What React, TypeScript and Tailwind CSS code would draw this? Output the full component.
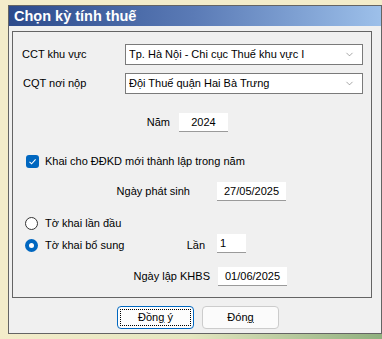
import React from 'react';
import { ChevronDown } from 'lucide-react';

function Select({ value }: { value: string }) {
  return (
    <div className="w-[238px] h-[21px] bg-white border border-[#7a7a7a] flex items-center pl-[3px] pr-[7px]">
      <span className="flex-1 truncate">{value}</span>
      <ChevronDown className="w-[11px] h-[11px] text-[#606060]" strokeWidth={1.2} />
    </div>
  );
}

function Field({ value, w, left }: { value: string; w: string; left?: boolean }) {
  return (
    <div
      className={`${w} h-[19px] bg-white border-b border-[#9a9a9a] flex items-center ${
        left ? 'pl-[3px]' : 'justify-center'
      }`}
    >
      {value}
    </div>
  );
}

function Radio({ checked }: { checked?: boolean }) {
  if (checked) {
    return (
      <div className="w-[13px] h-[13px] rounded-full bg-[#0067c0] flex items-center justify-center">
        <div className="w-[5px] h-[5px] rounded-full bg-white" />
      </div>
    );
  }
  return <div className="w-[13px] h-[13px] rounded-full border border-[#333] bg-white" />;
}

export default function App() {
  return (
    <div
      className="w-[382px] h-[339px] bg-[#f3ecca] pt-[5px] pl-[8px] text-[11px] text-black overflow-hidden"
      style={{ fontFamily: '"Liberation Sans", Arial, sans-serif' }}
    >
      <div className="w-[374px] h-[329px] border border-[#646464] bg-[#f0f0f0] flex flex-col">
        <div className="h-[20px] bg-gradient-to-r from-[#2c4a8c] via-[#5b7bb6] to-[#9dc0ea] flex items-center pl-[5px]">
          <span className="text-white font-bold text-[14.5px] leading-none">Chọn kỳ tính thuế</span>
        </div>

        <div className="ml-[3px] mt-[5px] w-[360px] h-[267px] border border-[#646464] flex flex-col">
          <div className="mt-[12px] flex items-center h-[21px]">
            <span className="w-[112px] pl-[9px]">CCT khu vực</span>
            <Select value="Tp. Hà Nội - Chi cục Thuế khu vực I" />
          </div>
          <div className="mt-[8px] flex items-center h-[21px]">
            <span className="w-[112px] pl-[10px]">CQT nơi nộp</span>
            <Select value="Đội Thuế quận Hai Bà Trưng" />
          </div>

          <div className="mt-[19px] flex items-center h-[19px]">
            <span className="w-[166px] text-right pr-[9px]">Năm</span>
            <Field value="2024" w="w-[49px]" />
          </div>

          <div className="mt-[23px] flex items-center h-[13px] pl-[13px]">
            <div className="w-[13px] h-[13px] rounded-[3px] bg-[#0067c0] flex items-center justify-center">
              <svg width="9" height="9" viewBox="0 0 9 9" fill="none">
                <path d="M1.5 4.8 L3.6 6.8 L7.6 2.4" stroke="white" strokeWidth="1.1" />
              </svg>
            </div>
            <span className="ml-[6px]">Khai cho ĐĐKD mới thành lập trong năm</span>
          </div>

          <div className="mt-[14px] flex items-center h-[19px]">
            <span className="w-[204px] text-right pr-[27px]">Ngày phát sinh</span>
            <Field value="27/05/2025" w="w-[69px]" />
          </div>

          <div className="mt-[16px] flex items-center h-[13px] pl-[12px]">
            <Radio />
            <span className="ml-[7px]">Tờ khai lần đầu</span>
          </div>

          <div className="mt-[4px] flex items-center h-[19px]">
            <div className="w-[204px] flex items-center pl-[12px] pt-[3px]">
              <Radio checked />
              <span className="ml-[7px]">Tờ khai bổ sung</span>
              <span className="ml-auto mr-[12px]">Lần</span>
            </div>
            <Field value="1" w="w-[29px]" left />
          </div>

          <div className="mt-[14px] flex items-center h-[19px]">
            <span className="w-[205px] text-right pr-[8px]">Ngày lập KHBS</span>
            <Field value="01/06/2025" w="w-[69px]" />
          </div>
        </div>

        <div className="mt-[8px] pl-[108px] flex gap-[8px]">
          <button className="w-[77px] h-[23px] rounded-[4px] border border-[#0067c0] bg-[#fdfdfd] p-[2px]">
            <div className="w-full h-full border border-dotted border-black flex items-center justify-center">
              <span>
                Đồn<span className="underline">g</span> ý
              </span>
            </div>
          </button>
          <button className="w-[77px] h-[23px] rounded-[4px] border border-[#cccccc] bg-[#fbfbfb] flex items-center justify-center">
            <span>
              Đón<span className="underline">g</span>
            </span>
          </button>
        </div>
      </div>
      <div className="h-[5px] -ml-[8px] bg-gradient-to-r from-[#f3ecca] via-[#e4e6c0] to-[#8fb07e]" />
    </div>
  );
}
